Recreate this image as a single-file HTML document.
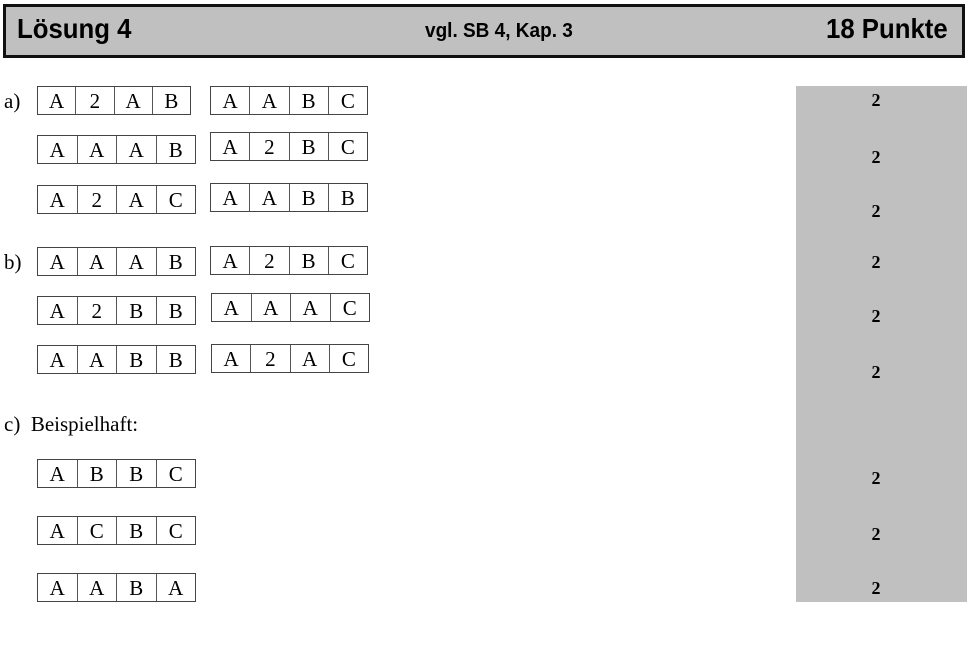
<!DOCTYPE html>
<html><head><meta charset="utf-8"><style>
body{margin:0;width:967px;height:650px;background:#fff;position:relative;overflow:hidden;font-family:"Liberation Serif",serif}
.hd{position:absolute;left:3px;top:4px;width:956px;height:48px;background:#c0c0c0;border:3px solid #111;font-family:"Liberation Sans",sans-serif;font-weight:bold}
.hd span{position:absolute;transform-origin:left top;transform:scaleX(0.92);white-space:nowrap}
.col{position:absolute;left:796px;top:86px;width:171px;height:516px;background:#c0c0c0}
.pt{position:absolute;left:796px;width:160px;text-align:center;font-weight:bold;font-size:18px;line-height:20px}
.b{position:absolute;display:flex;border:1px solid #444;box-sizing:border-box;height:29px}
.b div{flex:1;border-left:1px solid #555;text-align:center;font-size:21px;line-height:29px}
.b div:first-child{border-left:none}
.l{position:absolute;left:4px;font-size:21px;line-height:24px}
</style></head><body>
<div class="hd"><span style="left:11px;top:6px;font-size:28px">Lösung 4</span><span style="left:419px;top:13px;font-size:20px;transform:scaleX(0.95)">vgl. SB 4, Kap. 3</span><span style="left:820px;top:6px;font-size:28px">18 Punkte</span></div>
<div class="col"></div>
<div class="pt" style="top:90px">2</div>
<div class="pt" style="top:147px">2</div>
<div class="pt" style="top:201px">2</div>
<div class="pt" style="top:252px">2</div>
<div class="pt" style="top:306px">2</div>
<div class="pt" style="top:362px">2</div>
<div class="pt" style="top:468px">2</div>
<div class="pt" style="top:524px">2</div>
<div class="pt" style="top:578px">2</div>
<div class="l" style="top:89px">a)</div>
<div class="l" style="top:250px">b)</div>
<div class="l" style="top:412px">c)&nbsp;&nbsp;Beispielhaft:</div>
<div class="b" style="left:37px;top:86px;width:154px"><div>A</div><div>2</div><div>A</div><div>B</div></div>
<div class="b" style="left:210px;top:86px;width:158px"><div>A</div><div>A</div><div>B</div><div>C</div></div>
<div class="b" style="left:37px;top:135px;width:159px"><div>A</div><div>A</div><div>A</div><div>B</div></div>
<div class="b" style="left:210px;top:132px;width:158px"><div>A</div><div>2</div><div>B</div><div>C</div></div>
<div class="b" style="left:37px;top:185px;width:159px"><div>A</div><div>2</div><div>A</div><div>C</div></div>
<div class="b" style="left:210px;top:183px;width:158px"><div>A</div><div>A</div><div>B</div><div>B</div></div>
<div class="b" style="left:37px;top:247px;width:159px"><div>A</div><div>A</div><div>A</div><div>B</div></div>
<div class="b" style="left:210px;top:246px;width:158px"><div>A</div><div>2</div><div>B</div><div>C</div></div>
<div class="b" style="left:37px;top:296px;width:159px"><div>A</div><div>2</div><div>B</div><div>B</div></div>
<div class="b" style="left:211px;top:293px;width:159px"><div>A</div><div>A</div><div>A</div><div>C</div></div>
<div class="b" style="left:37px;top:345px;width:159px"><div>A</div><div>A</div><div>B</div><div>B</div></div>
<div class="b" style="left:211px;top:344px;width:158px"><div>A</div><div>2</div><div>A</div><div>C</div></div>
<div class="b" style="left:37px;top:459px;width:159px"><div>A</div><div>B</div><div>B</div><div>C</div></div>
<div class="b" style="left:37px;top:516px;width:159px"><div>A</div><div>C</div><div>B</div><div>C</div></div>
<div class="b" style="left:37px;top:573px;width:159px"><div>A</div><div>A</div><div>B</div><div>A</div></div>
</body></html>
